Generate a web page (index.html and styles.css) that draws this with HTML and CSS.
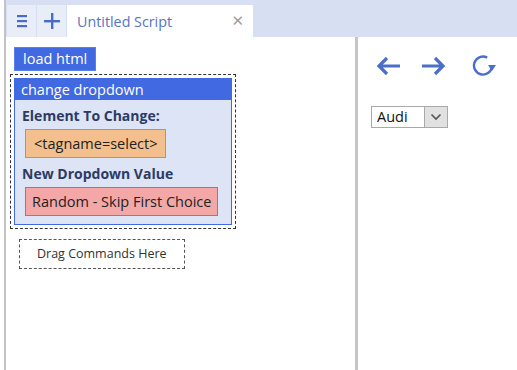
FILE: index.html
```html
<!DOCTYPE html>
<html>
<head>
<meta charset="utf-8">
<link rel="stylesheet" href="styles.css">
</head>
<body>
<div class="app">
  <div class="topbar">
    <div class="tbtn">
      <svg width="14" height="14" viewBox="0 0 14 14"><rect x="2" y="1" width="10" height="2.2" fill="#4a6cc6"/><rect x="2" y="6" width="10" height="2.2" fill="#4a6cc6"/><rect x="2" y="11" width="10" height="2.2" fill="#4a6cc6"/></svg>
    </div>
    <div class="tbtn">
      <svg width="16" height="16" viewBox="0 0 16 16"><rect x="7" y="0" width="2.4" height="16" fill="#4a6cc6"/><rect x="0" y="7" width="16" height="2.4" fill="#4a6cc6"/></svg>
    </div>
    <div class="tab">
      <span class="tab-title">Untitled Script</span>
      <span class="tab-close">✕</span>
    </div>
  </div>
  <div class="main">
    <div class="left">
      <div class="cmd-btn">load html</div>
      <div class="dashed-wrap">
        <div class="block">
          <div class="block-head">change dropdown</div>
          <div class="block-body">
            <div class="label">Element To Change:</div>
            <div class="chip chip-orange">&lt;tagname=select&gt;</div>
            <div class="label">New Dropdown Value</div>
            <div class="chip chip-red">Random - Skip First Choice</div>
          </div>
        </div>
      </div>
      <div class="drop-here">Drag Commands Here</div>
    </div>
    <div class="divider"></div>
    <div class="right">
      <div class="nav">
        <svg class="ic-back" width="28" height="22" viewBox="0 0 28 22"><path d="M26 11H5M13 3l-8 8 8 8" fill="none" stroke="#4b6fc9" stroke-width="3.2"/></svg>
        <svg class="ic-fwd" width="28" height="22" viewBox="0 0 28 22"><path d="M3 11h21M16 3l8 8-8 8" fill="none" stroke="#4b6fc9" stroke-width="3.2"/></svg>
        <svg class="ic-reload" width="28" height="22" viewBox="0 0 28 22"><path d="M16.2 2.6A9 9 0 1 0 20.9 11.8" fill="none" stroke="#4b6fc9" stroke-width="2.4"/><path d="M17 10h8l-4 6z" fill="#4b6fc9"/></svg>
      </div>
      <div class="select">
        <span class="sel-text">Audi</span>
        <span class="sel-btn"><svg width="12" height="8" viewBox="0 0 12 8"><path d="M1.5 1.5l4.5 4.5 4.5-4.5" fill="none" stroke="#555" stroke-width="1.6"/></svg></span>
      </div>
    </div>
  </div>
</div>
</body>
</html>
```

FILE: styles.css
```css
html, body {
  margin: 0;
  padding: 0;
  background: #ffffff;
}
body {
  font-family: "Open Sans", "Noto Sans", sans-serif;
  width: 517px;
  height: 370px;
  overflow: hidden;
}
.app {
  margin-left: 4px;
  border-left: 2px solid #c3c3c3;
  height: 370px;
  display: flex;
  flex-direction: column;
}
.topbar {
  height: 37px;
  background: #d7e0f3;
  display: flex;
  align-items: flex-end;
  padding-left: 1px;
  flex: none;
}
.tbtn {
  width: 29px;
  height: 32px;
  background: #e8edf8;
  display: flex;
  align-items: center;
  justify-content: center;
  margin-right: 1px;
}
.tab {
  width: 186px;
  height: 32px;
  background: #ffffff;
  display: flex;
  align-items: center;
  justify-content: space-between;
  padding: 0 9px 0 10px;
  box-sizing: border-box;
}
.tab-title {
  color: #5874c4;
  font-size: 14.3px;
}
.tab-close {
  color: #a0a0a0;
  font-size: 15px;
  font-family: "DejaVu Sans", sans-serif;
}
.main {
  flex: 1;
  display: flex;
}
.left {
  width: 349px;
  padding: 10px 0 0 4px;
  box-sizing: border-box;
}
.divider {
  width: 3px;
  background: #c6c6c6;
}
.right {
  flex: 1;
  padding: 18px 0 0 13px;
}
.cmd-btn {
  display: inline-block;
  margin-left: 4px;
  background: #4169e1;
  border: 1px solid #5b7fe6;
  color: #ffffff;
  font-size: 14.5px;
  line-height: 22px;
  padding: 0 8px;
}
.dashed-wrap {
  margin-top: 3px;
  width: 226px;
  border: 1px dashed #333;
  padding: 3px;
  box-sizing: border-box;
}
.block {
  background: #dce4f6;
  border: 1px solid #4169e1;
}
.block-head {
  background: #4169e1;
  color: #ffffff;
  font-size: 14.5px;
  line-height: 21px;
  padding-left: 6px;
}
.block-body {
  padding: 6px 0 8px 7px;
}
.label {
  color: #2c3b63;
  font-weight: bold;
  font-size: 14px;
  line-height: 19px;
}
.chip {
  display: inline-block;
  margin: 4px 0 6px 3px;
  font-size: 14.5px;
  line-height: 27px;
  padding: 0 8px;
  color: #222;
}
.chip-orange {
  background: #f3c08d;
  border: 1px solid #c9914f;
}
.chip-red {
  background: #f4a7a7;
  border: 1px solid #d9606b;
  margin-bottom: 0;
  padding: 0 6px;
}
.drop-here {
  display: inline-block;
  margin: 10px 0 0 9px;
  border: 1px dashed #555;
  font-size: 12.5px;
  color: #333;
  line-height: 28px;
  padding: 0 17px;
}
.nav {
  display: flex;
  align-items: center;
}
.ic-back {
  margin-left: 3px;
}
.ic-fwd {
  margin-left: 17px;
}
.ic-reload {
  margin-left: 24px;
}
.select {
  margin-top: 29px;
  display: inline-flex;
  border: 1px solid #a9a9a9;
  height: 22px;
  box-sizing: border-box;
}
.sel-text {
  font-size: 14.5px;
  line-height: 20px;
  padding: 0 8px 0 5px;
  width: 39px;
  color: #111;
}
.sel-btn {
  width: 22px;
  background: #e1e1e1;
  border-left: 1px solid #a9a9a9;
  display: flex;
  align-items: center;
  justify-content: center;
}
```
